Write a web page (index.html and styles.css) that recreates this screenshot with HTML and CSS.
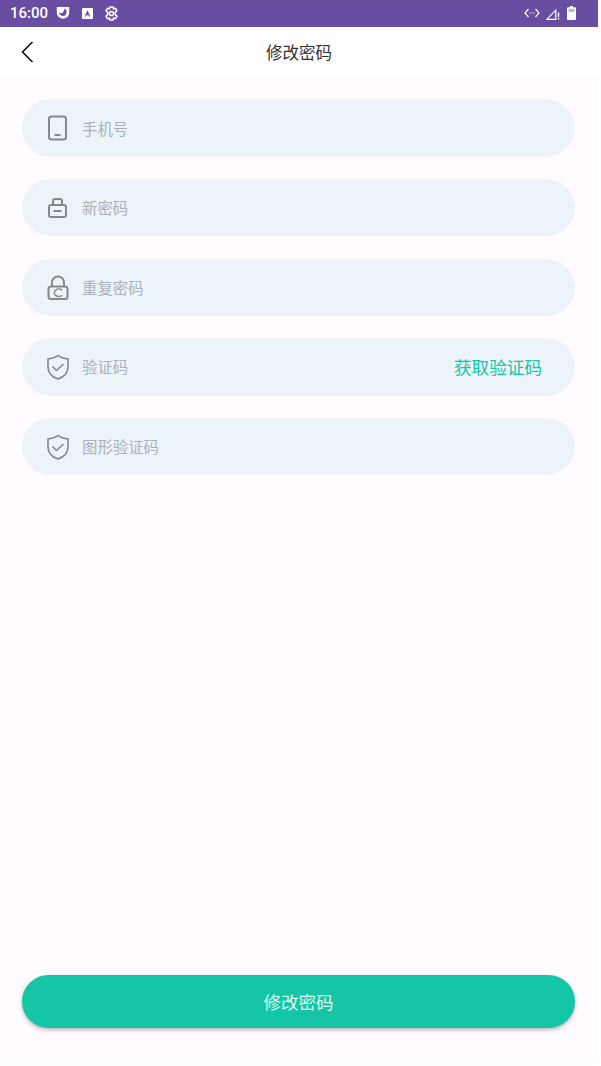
FILE: index.html
```html
<!DOCTYPE html>
<html lang="zh">
<head>
<meta charset="utf-8">
<title>修改密码</title>
<link rel="stylesheet" href="styles.css">
</head>
<body>
<div class="screen">
  <div class="status">
    <div class="status-left">
      <span class="time">16:00</span>
      <svg class="si" width="14" height="14" viewBox="0 0 14 14"><path d="M.8 1h12.400v5.500a6.200 6.200 0 0 1-12.400 0z" fill="#fff"/><path d="M8.200 2.800a3.700 3.700 0 1 1-5 3.800c1.500 1.400 4.800 1 5-3.800z" fill="#674ea0"/></svg>
      <svg class="si si2" width="11" height="11" viewBox="0 0 11 11"><rect width="11" height="11" rx="1" fill="#fff"/><path d="M2.800 8.500 5.500 2l2.700 6.500H7L6.600 7.300H4.400L4 8.500z" fill="#674ea0"/></svg>
      <svg class="si si3" width="15" height="15" viewBox="0 0 16 16" fill="none" stroke="#fff" stroke-width="1.600"><path d="M6.500 1h3l.7 2 2.100-.4 1.500 2.600L12 6.800v2.400l1.800 1.600-1.500 2.600-2.100-.4-.7 2H6.500l-.7-2-2.100.4-1.500-2.600L4 9.200V6.800L2.200 5.200l1.500-2.600 2.100.4z"/><circle cx="8" cy="8" r="2.200"/></svg>
    </div>
    <div class="status-right">
      <svg width="16" height="10" viewBox="0 0 16 10" fill="none" stroke="#fff" stroke-width="1.200"><path d="M4.500 1 1 5l3.500 4M11.500 1 15 5l-3.500 4"/><path d="M5.500 5h1M7.500 5h1M9.500 5h1"/></svg>
      <svg class="sig" width="14" height="11" viewBox="0 0 14 11" fill="none" stroke="#fff"><path d="M.8 10.300 9.800 1.200v9.100z" stroke-width="1.200"/><path d="M12.500 3.500v4.500M12.500 9v1.500" stroke-width="1.400"/></svg>
      <svg class="bat" width="9" height="14" viewBox="0 0 9 14"><path d="M3 0h3v1.200h2a1 1 0 0 1 1 1V13a1 1 0 0 1-1 1H1a1 1 0 0 1-1-1V2.200a1 1 0 0 1 1-1h2z" fill="#fff"/><rect x="1.500" y="2.700" width="6" height="3.300" fill="#674ea0" opacity=".4"/></svg>
    </div>
  </div>
  <header class="nav">
    <svg class="back" width="14" height="22" viewBox="0 0 14 22" fill="none" stroke="#111" stroke-width="1.600"><path d="M12.500 1 2.500 11l10 10"/></svg>
    <h1 class="title">修改密码</h1>
  </header>
  <main class="main">
    <div class="form">
      <div class="field">
        <svg class="ico" width="24" height="26" viewBox="0 0 24 26" fill="none" stroke="#85888b" stroke-width="2"><rect x="3" y="1.500" width="17" height="23" rx="2.500"/><path d="M8.500 20h6"/></svg>
        <span class="ph">手机号</span>
      </div>
      <div class="field">
        <svg class="ico" width="24" height="22" viewBox="0 0 24 22" fill="none" stroke="#85888b" stroke-width="2"><rect x="3" y="8" width="17" height="12" rx="2"/><path d="M7 8V4a2 2 0 0 1 2-2h5a2 2 0 0 1 2 2v4M7.500 14h8"/></svg>
        <span class="ph">新密码</span>
      </div>
      <div class="field">
        <svg class="ico" width="24" height="26" viewBox="0 0 24 26" fill="none" stroke="#85888b" stroke-width="2"><rect x="2.500" y="12.500" width="19" height="12.500" rx="2.500"/><path d="M6 12.500V8.500a6 6 0 0 1 12 0v4"/><path d="M16.300 16.200a4.600 3.700 0 1 0 0 5" stroke-width="1.500"/></svg>
        <span class="ph">重复密码</span>
      </div>
      <div class="field">
        <svg class="ico" width="24" height="26" viewBox="0 0 24 26" fill="none" stroke="#85888b" stroke-width="1.600"><path d="M12 1.500c2.500 2 5.500 3.200 10 3.500v8c0 6-4.500 10-10 12C6.500 23 2 19 2 13V5c4.500-.3 7.500-1.500 10-3.500z"/><path d="m6.500 12.500 4 4 7-6.500"/></svg>
        <span class="ph">验证码</span>
        <span class="code">获取验证码</span>
      </div>
      <div class="field">
        <svg class="ico" width="24" height="26" viewBox="0 0 24 26" fill="none" stroke="#85888b" stroke-width="1.600"><path d="M12 1.500c2.500 2 5.500 3.200 10 3.500v8c0 6-4.500 10-10 12C6.500 23 2 19 2 13V5c4.500-.3 7.500-1.500 10-3.500z"/><path d="m6.500 12.500 4 4 7-6.500"/></svg>
        <span class="ph">图形验证码</span>
      </div>
    </div>
    <button class="submit" type="button">修改密码</button>
  </main>
</div>
</body>
</html>
```

FILE: styles.css
```css
* { box-sizing: border-box; margin: 0; padding: 0; }
html, body { width: 601px; height: 1066px; overflow: hidden; background: #fff; }
body { font-family: "Noto Sans CJK SC", "Roboto", sans-serif; }
.screen { width: 598px; height: 1060px; display: flex; flex-direction: column; background: #fffbff; }
.status { height: 26.5px; background: #674ea0; color: #fff; display: flex; align-items: center; justify-content: space-between; padding: 0 22px 0 10px; }
.status-left, .status-right { display: flex; align-items: center; }
.time { font-family: Roboto, sans-serif; font-size: 15px; font-weight: 500; width: 46px; }
.si { display: block; }
.si2 { margin-left: 12px; }
.si3 { margin-left: 11px; }
.sig { margin-left: 6px; margin-top: 3px; }
.bat { margin-left: 7px; }
.nav { height: 50.5px; background: #fff; display: flex; align-items: center; justify-content: center; position: relative; }
.back { position: absolute; left: 19.5px; top: 14.5px; }
.title { font-size: 16.5px; font-weight: 400; color: #333; }
.main { flex: 1; display: flex; flex-direction: column; justify-content: space-between; padding: 22.4px 23px 32px 22px; }
.form { display: flex; flex-direction: column; gap: 22.35px; }
.field { height: 57.3px; border-radius: 29px; background: #ecf4f9; display: flex; align-items: center; padding: 0 33px 0 24px; }
.ico { flex: none; display: block; }
.ph { margin-left: 12px; font-size: 15.4px; color: #abb1b9; flex: 1; padding-bottom: 1px; }
.code { font-size: 17.6px; color: #14c6a6; }
.submit { height: 53px; border: 0; border-radius: 27px; background: #14c6a6; color: #dcf8f1; font: 400 17.5px "Noto Sans CJK SC", sans-serif; box-shadow: 0 2px 4px rgba(0,0,0,.28); }
```
